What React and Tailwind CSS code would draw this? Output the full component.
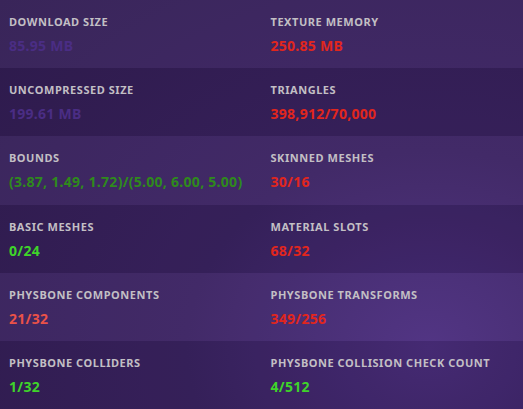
import React from "react";

const rows = [
  [
    { label: "Download Size", value: "85.95 MB", color: "text-[#4a2d84]" },
    { label: "Texture Memory", value: "250.85 MB", color: "text-[#e1261d]" },
  ],
  [
    { label: "Uncompressed Size", value: "199.61 MB", color: "text-[#4a2d84]" },
    { label: "Triangles", value: "398,912/70,000", color: "text-[#e1261d]" },
  ],
  [
    {
      label: "Bounds",
      value: "(3.87, 1.49, 1.72)/(5.00, 6.00, 5.00)",
      color: "text-[#2f8a1c]",
    },
    { label: "Skinned Meshes", value: "30/16", color: "text-[#e1261d]" },
  ],
  [
    { label: "Basic Meshes", value: "0/24", color: "text-[#3fd42a]" },
    { label: "Material Slots", value: "68/32", color: "text-[#e1261d]" },
  ],
  [
    { label: "PhysBone Components", value: "21/32", color: "text-[#ea5248]" },
    { label: "PhysBone Transforms", value: "349/256", color: "text-[#e1261d]" },
  ],
  [
    { label: "PhysBone Colliders", value: "1/32", color: "text-[#3fd42a]" },
    {
      label: "PhysBone Collision Check Count",
      value: "4/512",
      color: "text-[#3fd42a]",
    },
  ],
];

function Stat({ label, value, color }) {
  return (
    <div className="flex flex-col pl-[9px] pt-[15px]">
      <span className="text-[11px] font-bold uppercase leading-[14px] tracking-[0.05em] text-[#c2bfc4]">
        {label}
      </span>
      <span className={`mt-[8px] text-[14px] font-bold leading-[17px] tracking-[0.02em] ${color}`}>
        {value}
      </span>
    </div>
  );
}

export default function App() {
  return (
    <div
      className="flex h-[409px] w-[523px] flex-col bg-[#351f58] bg-[radial-gradient(ellipse_at_82%_85%,#4d2f80_0%,#3c2464_40%,#331e54_100%)]"
      style={{ fontFamily: '"Noto Sans", "Open Sans", sans-serif' }}
    >
      {rows.map((row, i) => (
        <div
          key={i}
          className={`grid flex-1 grid-cols-2 ${
            i % 2 === 0 ? "bg-[#ffffff08]" : "bg-[#0000001a]"
          }`}
        >
          {row.map((s) => (
            <Stat key={s.label} {...s} />
          ))}
        </div>
      ))}
    </div>
  );
}
